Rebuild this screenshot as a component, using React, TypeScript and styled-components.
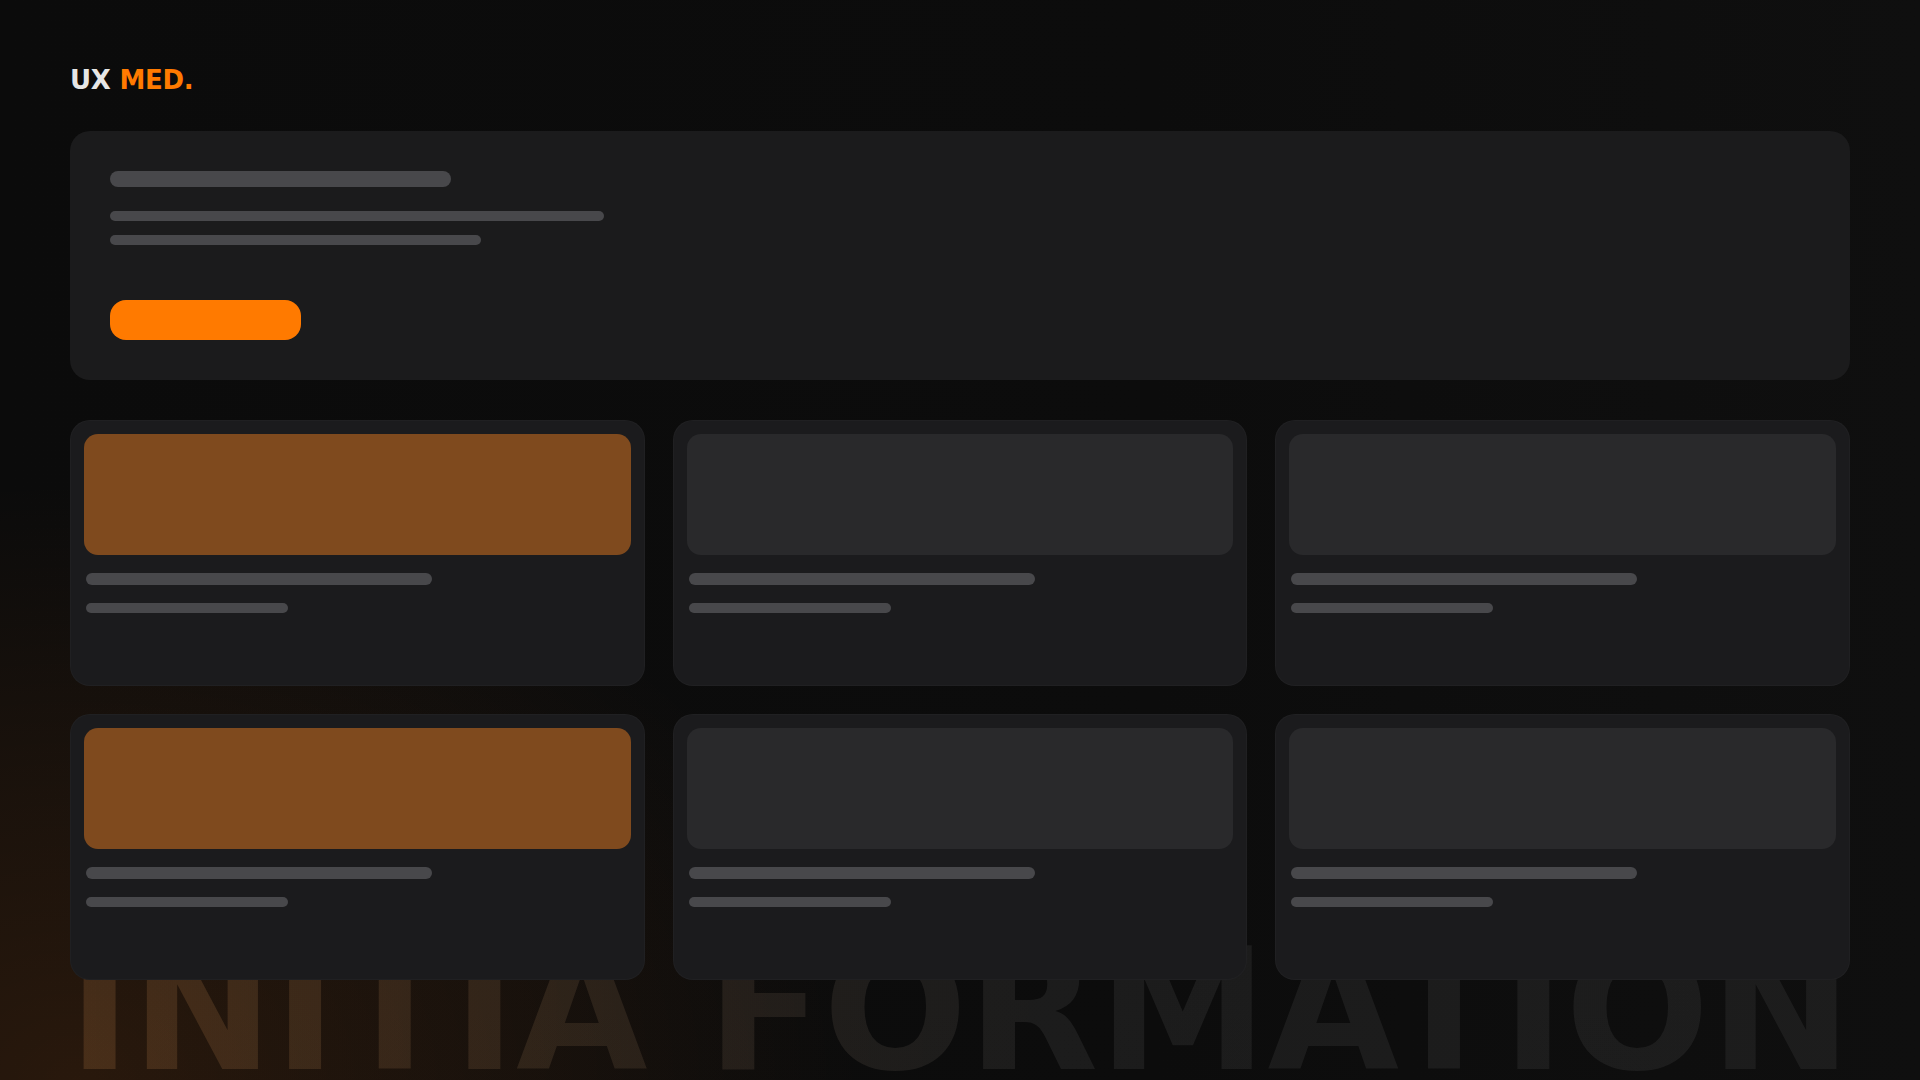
import React from "react";
import styled, { createGlobalStyle } from "styled-components";

const GlobalStyle = createGlobalStyle`
  html, body {
    margin: 0;
    padding: 0;
    background: #0b0b0b;
  }
  * { box-sizing: border-box; }
`;

const Page = styled.div`
  position: relative;
  min-height: 100vh;
  overflow: hidden;
  padding: 65px 70px 0;
  font-family: "DejaVu Sans", "Liberation Sans", sans-serif;
  background:
    radial-gradient(ellipse 1050px 800px at 4% 100%, rgba(255, 120, 20, 0.12), rgba(255, 120, 20, 0.05) 45%, transparent 75%),
    linear-gradient(90deg, #0b0b0b 0%, #0c0c0c 60%, #0f0f0f 100%);
`;

const Watermark = styled.div`
  position: absolute;
  left: 0;
  right: 0;
  bottom: -15px;
  z-index: 0;
  text-align: center;
  white-space: nowrap;
  font-family: "DejaVu Sans", sans-serif;
  font-weight: 700;
  font-size: 170px;
  line-height: 1;
  background: linear-gradient(90deg, rgba(255, 170, 90, 0.16) 0%, rgba(255, 200, 150, 0.1) 30%, rgba(255, 255, 255, 0.065) 55%, rgba(255, 255, 255, 0.06) 100%);
  -webkit-background-clip: text;
  background-clip: text;
  color: transparent;
  user-select: none;
  pointer-events: none;
`;

const Content = styled.div`
  position: relative;
  z-index: 1;
`;

const Logo = styled.div`
  font-family: "DejaVu Sans", sans-serif;
  font-weight: 700;
  font-size: 26px;
  line-height: 30px;
  letter-spacing: -0.01em;
  color: #e6e6e6;
`;

const Accent = styled.span`
  color: #ff7a00;
`;

const Hero = styled.section`
  margin-top: 36px;
  height: 249px;
  padding: 40px;
  border-radius: 20px;
  background: #1b1b1c;
  display: flex;
  flex-direction: column;
`;

const Bar = styled.div<{ $w: number; $h: number; $mt?: number }>`
  width: ${(p) => p.$w}px;
  height: ${(p) => p.$h}px;
  margin-top: ${(p) => p.$mt ?? 0}px;
  border-radius: 999px;
  background: #48484b;
  flex-shrink: 0;
`;

const CTA = styled.button`
  margin-top: 55px;
  width: 191px;
  height: 41px;
  border: none;
  border-radius: 16px;
  background: #ff7a00;
  padding: 0;
  cursor: pointer;
`;

const Grid = styled.div`
  margin-top: 40px;
  display: grid;
  grid-template-columns: repeat(3, 1fr);
  gap: 28px;
`;

const Card = styled.article`
  height: 266px;
  padding: 13px;
  border-radius: 20px;
  background: #1b1b1d;
  border: 1px solid rgba(255, 255, 255, 0.025);
  display: flex;
  flex-direction: column;
`;

const Thumb = styled.div<{ $accent?: boolean }>`
  height: 121px;
  border-radius: 14px;
  background: ${(p) => (p.$accent ? "#7f4a1e" : "#29292b")};
`;

const CardText = styled.div`
  padding: 0 2px;
  display: flex;
  flex-direction: column;
`;

const cards = [true, false, false, true, false, false];

export default function App() {
  return (
    <>
      <GlobalStyle />
      <Page>
        <Watermark>INITIA FORMATION</Watermark>
        <Content>
          <Logo>
            UX <Accent>MED.</Accent>
          </Logo>
          <Hero>
            <Bar $w={341} $h={16} />
            <Bar $w={494} $h={10} $mt={24} />
            <Bar $w={371} $h={10} $mt={14} />
            <CTA aria-label="action" />
          </Hero>
          <Grid>
            {cards.map((accent, i) => (
              <Card key={i}>
                <Thumb $accent={accent} />
                <CardText>
                  <Bar $w={346} $h={12} $mt={18} />
                  <Bar $w={202} $h={10} $mt={18} />
                </CardText>
              </Card>
            ))}
          </Grid>
        </Content>
      </Page>
    </>
  );
}
